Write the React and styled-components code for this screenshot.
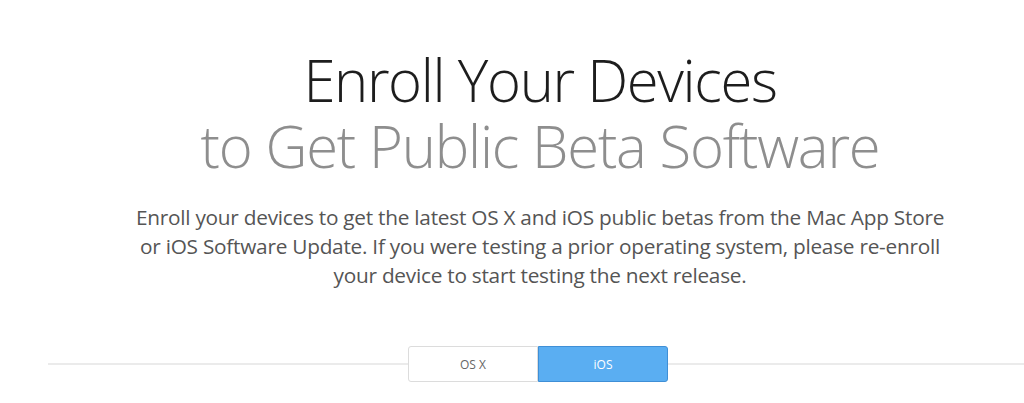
import React, { useState } from "react";
import styled, { createGlobalStyle } from "styled-components";

const GlobalStyle = createGlobalStyle`
  html, body {
    margin: 0;
    padding: 0;
    background: #ffffff;
  }
  body {
    font-family: "Open Sans", "Liberation Sans", sans-serif;
  }
`;

const Page = styled.div`
  width: 1024px;
  height: 403px;
  overflow: hidden;
  display: flex;
  flex-direction: column;
  align-items: center;
  padding: 47px 0 0 56px;
  box-sizing: border-box;
`;

const Heading = styled.header`
  display: flex;
  flex-direction: column;
  align-items: center;
`;

const TitleLine = styled.h1`
  margin: 0;
  font-weight: 300;
  font-size: 58px;
  line-height: 66px;
  height: 66px;
  white-space: nowrap;
  text-align: center;
  letter-spacing: ${({ muted }) => (muted ? "-1.2px" : "-1.4px")};
  color: ${({ muted }) => (muted ? "#8e8e8e" : "#1d1d1d")};
`;

const Intro = styled.p`
  margin: 24px 0 0;
  width: 822px;
  font-size: 20.8px;
  line-height: 29px;
  font-weight: 400;
  text-align: center;
  color: #555555;
  letter-spacing: -0.25px;
`;

const Divider = styled.div`
  align-self: stretch;
  margin: 56px -4px 0 -8px;
  display: flex;
  align-items: center;

  &::before,
  &::after {
    content: "";
    flex: 1;
    height: 2px;
    background: #ebebeb;
  }
`;

const Segmented = styled.div`
  display: flex;
`;

const Segment = styled.button`
  width: 130px;
  height: 36px;
  box-sizing: border-box;
  font-family: "Open Sans", "Liberation Sans", sans-serif;
  font-size: 12px;
  cursor: pointer;
  border: 1px solid ${({ active }) => (active ? "#3f8fd6" : "#dcdcdc")};
  background: ${({ active }) => (active ? "#5aaef2" : "#ffffff")};
  color: ${({ active }) => (active ? "#ffffff" : "#666666")};
  border-radius: ${({ side }) => (side === "left" ? "3px 0 0 3px" : "0 3px 3px 0")};
`;

export default function App() {
  const [platform, setPlatform] = useState("ios");

  return (
    <>
      <GlobalStyle />
      <Page>
        <Heading>
          <TitleLine>Enroll Your Devices</TitleLine>
          <TitleLine as="h2" muted>
            to Get Public Beta Software
          </TitleLine>
        </Heading>
        <Intro>
          Enroll your devices to get the latest OS X and iOS public betas from the Mac App Store
          or iOS Software Update. If you were testing a prior operating system, please re-enroll
          your device to start testing the next release.
        </Intro>
        <Divider>
          <Segmented>
            <Segment side="left" active={platform === "osx"} onClick={() => setPlatform("osx")}>
              OS X
            </Segment>
            <Segment side="right" active={platform === "ios"} onClick={() => setPlatform("ios")}>
              iOS
            </Segment>
          </Segmented>
        </Divider>
      </Page>
    </>
  );
}
